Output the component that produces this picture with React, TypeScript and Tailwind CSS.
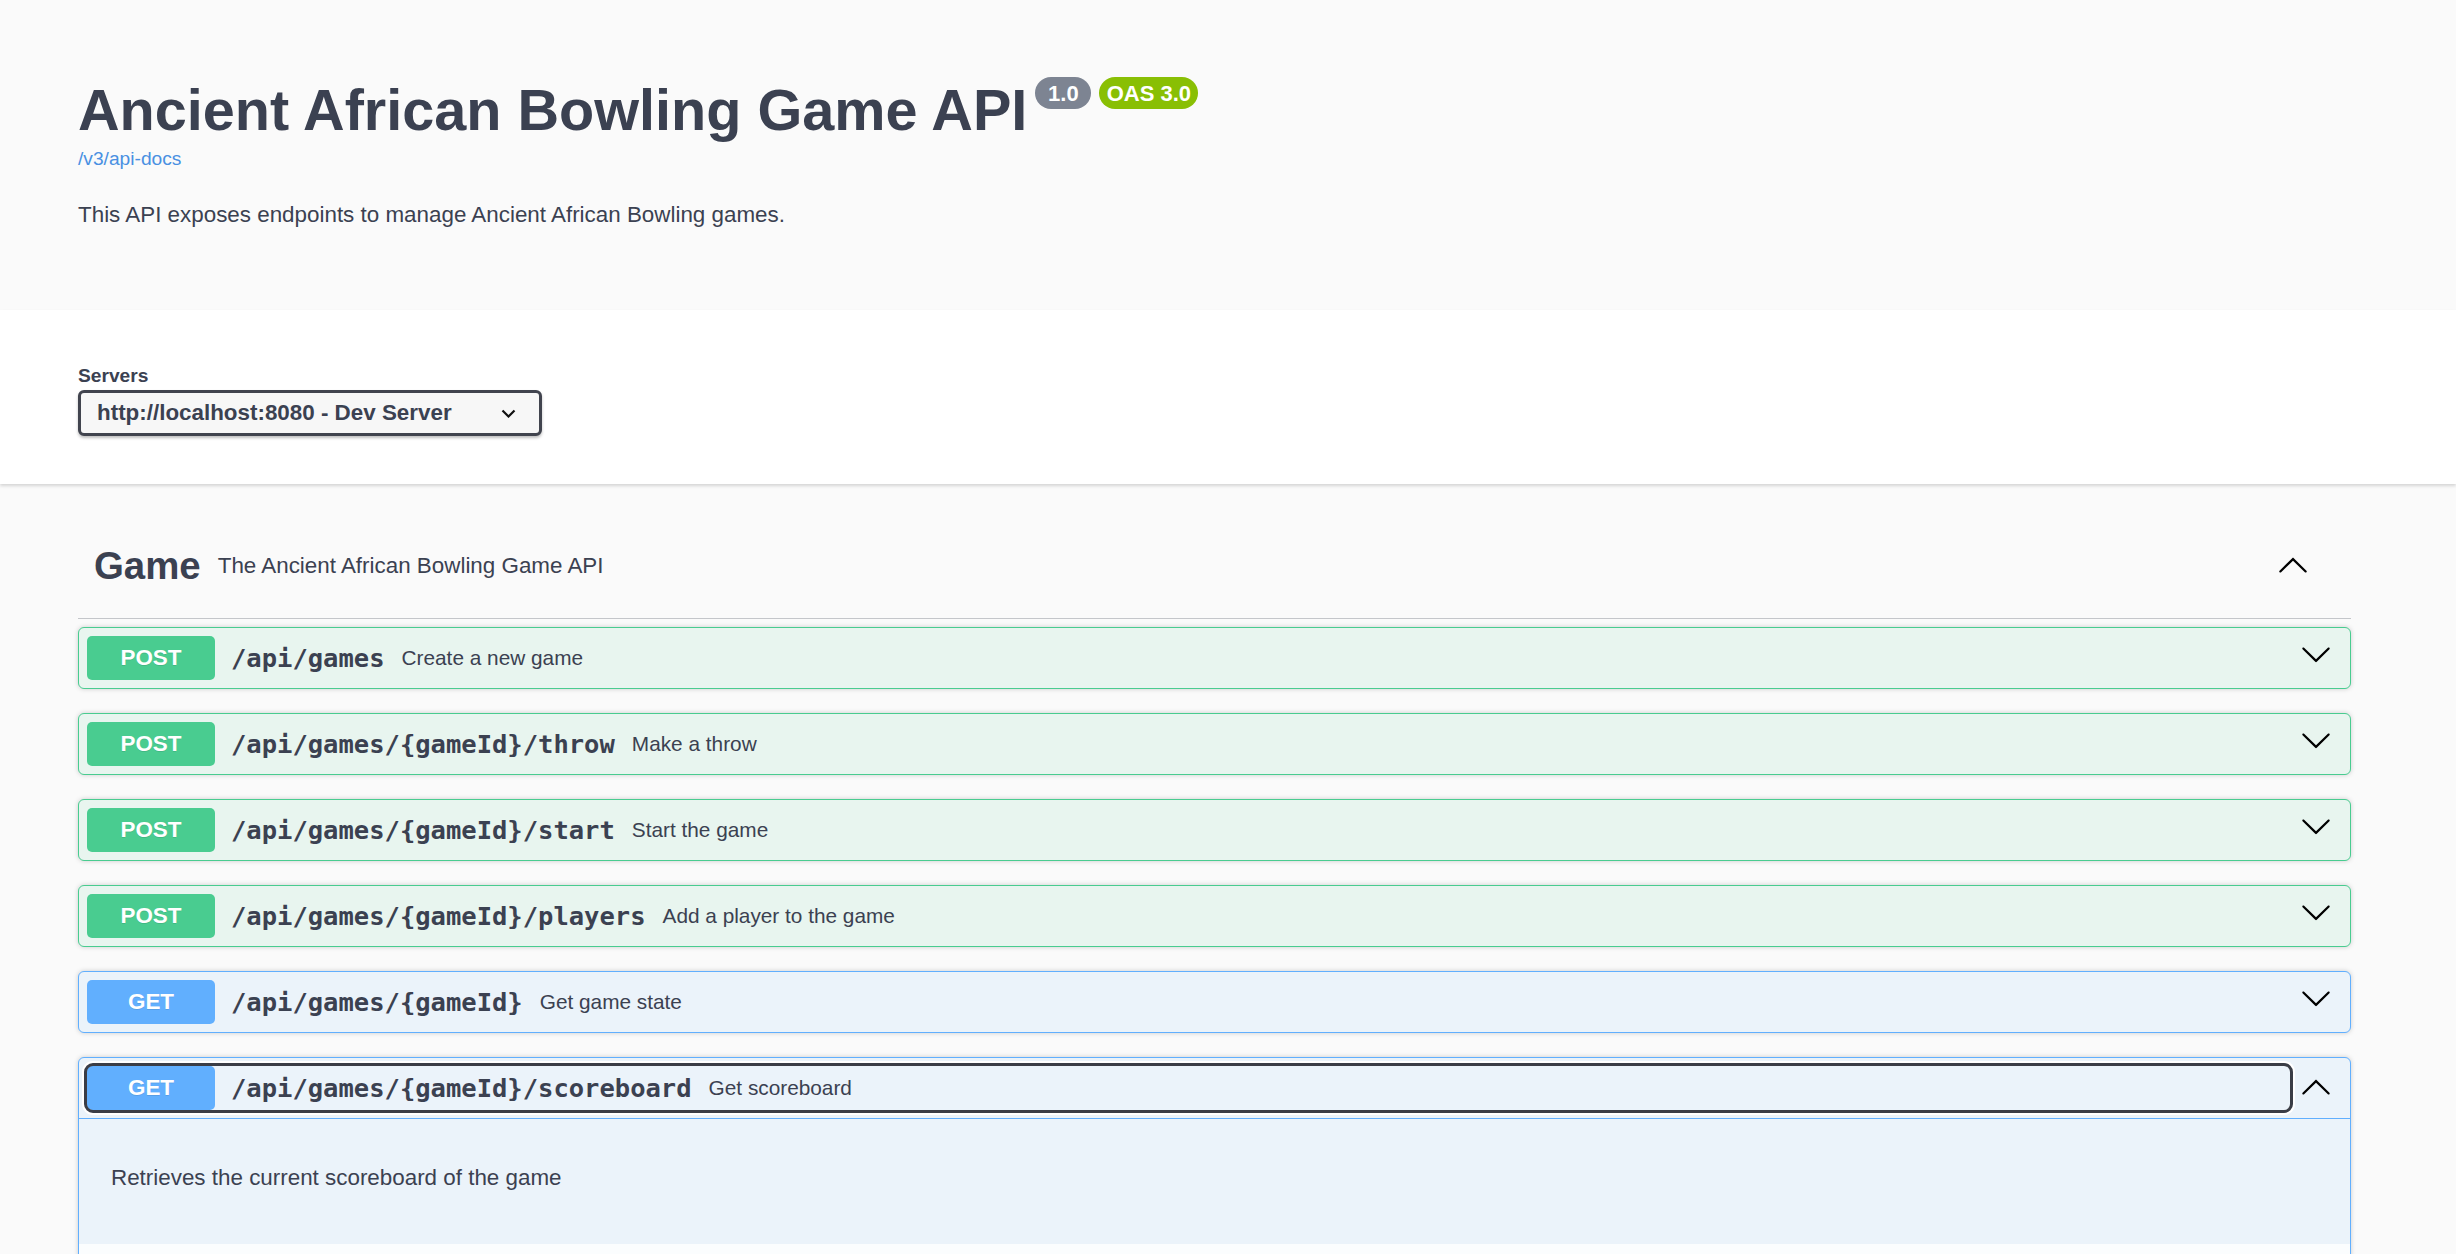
import React from "react";

const ArrowPath =
  "M17.418 6.109c.272-.268.709-.268.979 0s.271.701 0 .969l-7.908 7.83c-.27.268-.707.268-.979 0l-7.908-7.83c-.27-.268-.27-.701 0-.969.271-.268.709-.268.979 0L10 13.25l7.418-7.141z";

function Chevron({ up, className = "" }: { up?: boolean; className?: string }) {
  return (
    <svg
      width="32"
      height="32"
      viewBox="0 0 20 20"
      className={`shrink-0 ${up ? "rotate-180" : ""} ${className}`}
    >
      <path d={ArrowPath} fill="#000" />
    </svg>
  );
}

type Op = { m: "POST" | "GET"; path: string; desc: string; open?: boolean };

const ops: Op[] = [
  { m: "POST", path: "/api/games", desc: "Create a new game" },
  { m: "POST", path: "/api/games/{gameId}/throw", desc: "Make a throw" },
  { m: "POST", path: "/api/games/{gameId}/start", desc: "Start the game" },
  { m: "POST", path: "/api/games/{gameId}/players", desc: "Add a player to the game" },
  { m: "GET", path: "/api/games/{gameId}", desc: "Get game state" },
  { m: "GET", path: "/api/games/{gameId}/scoreboard", desc: "Get scoreboard", open: true },
];

function OpBlock({ op }: { op: Op }) {
  const post = op.m === "POST";
  return (
    <div
      className={`mb-[24px] rounded-[6px] border shadow-[0_0_5px_rgba(0,0,0,0.19)] ${
        post ? "border-[#49cc90] bg-[#e8f5ef]" : "border-[#61affe] bg-[#ebf3fa]"
      }`}
    >
      <div className={`flex items-center p-[8px] ${op.open ? "border-b border-[#61affe]" : ""}`}>
        <div
          className={`flex flex-1 items-center rounded-[6px] ${
            op.open ? "outline-[3px] outline-solid outline-[#3a3d46] shadow-[0_0_0_5px_#ffffff]" : ""
          }`}
        >
          <span
            className={`flex h-[44px] w-[128px] shrink-0 items-center justify-center rounded-[5px] text-[22.4px] font-bold text-white [text-shadow:0_1px_0_rgba(0,0,0,0.1)] ${
              post ? "bg-[#49cc90]" : "bg-[#61affe]"
            }`}
          >
            {op.m}
          </span>
          <span className="px-[16px] font-['DejaVu_Sans_Mono',monospace] text-[25.5px] font-bold text-[#3b4151]">
            {op.path}
          </span>
          <span className="ml-[1px] text-[20.8px] text-[#3b4151]">{op.desc}</span>
        </div>
        {op.open ? (
          <Chevron up className="ml-[10px] mr-[10px]" />
        ) : (
          <Chevron className="ml-[10px] mr-[10px] -mt-[8px]" />
        )}
      </div>
      {op.open && (
        <div>
          <div className="pl-[32px] pt-[46px] pb-[53px] text-[22.4px] leading-[26px] text-[#3b4151]">
            Retrieves the current scoreboard of the game
          </div>
          <div className="h-[60px] bg-white/80" />
        </div>
      )}
    </div>
  );
}

export default function App() {
  return (
    <div className="h-[1254px] overflow-hidden bg-[#fafafa] font-['Liberation_Sans',Arial,sans-serif] text-[#3b4151]">
      {/* Info header */}
      <div className="ml-[78px] w-[2273px] pt-[77px] pb-[82px]">
        <div className="flex items-start">
          <h1 className="text-[57.6px] font-bold leading-[66px] text-[#3b4151]">
            Ancient African Bowling Game API
          </h1>
          <span className="ml-[8px] flex h-[32px] w-[56px] items-center justify-center rounded-full bg-[#7d8492] text-[22px] font-bold text-white">
            1.0
          </span>
          <span className="ml-[8px] flex h-[32px] w-[99px] items-center justify-center rounded-full bg-[#89bf04] text-[22px] font-bold text-white">
            OAS 3.0
          </span>
        </div>
        <div className="mt-[5px] text-[19.2px] leading-[22px] text-[#4990e2]">/v3/api-docs</div>
        <p className="mt-[32px] text-[22.4px] leading-[26px]">
          This API exposes endpoints to manage Ancient African Bowling games.
        </p>
      </div>

      {/* Servers band */}
      <div className="relative bg-white shadow-[0_2px_3px_0_rgba(0,0,0,0.15)]">
        <div className="ml-[78px] w-[2273px] pt-[55px] pb-[48px]">
          <div className="text-[19.2px] font-bold leading-[22px]">Servers</div>
          <div className="mt-[3px] flex h-[46px] w-[464px] items-center justify-between rounded-[6px] border-[3px] border-[#41444e] bg-[#f7f7f7] pl-[16px] pr-[23px] shadow-[0_2px_3px_0_rgba(0,0,0,0.25)]">
            <span className="text-[22.4px] font-bold text-[#3b4151]">http://localhost:8080 - Dev Server</span>
            <svg width="15" height="9" viewBox="0 0 15 9">
              <polyline points="1.5,1.5 7.5,7.5 13.5,1.5" fill="none" stroke="#111" strokeWidth="2.2" />
            </svg>
          </div>
        </div>
      </div>

      {/* Tag section */}
      <div className="ml-[78px] mt-[30px] w-[2273px]">
        <div className="flex h-[105px] items-center border-b border-[#c4c6ca] pl-[16px]">
          <span className="text-[38.4px] font-bold text-[#3b4151]">Game</span>
          <span className="ml-[17px] flex-1 text-[22.4px] text-[#3b4151]">The Ancient African Bowling Game API</span>
          <Chevron up className="mr-[42px]" />
        </div>
        <div className="mt-[8px]">
          {ops.map((op) => (
            <OpBlock key={op.path} op={op} />
          ))}
        </div>
      </div>
    </div>
  );
}
